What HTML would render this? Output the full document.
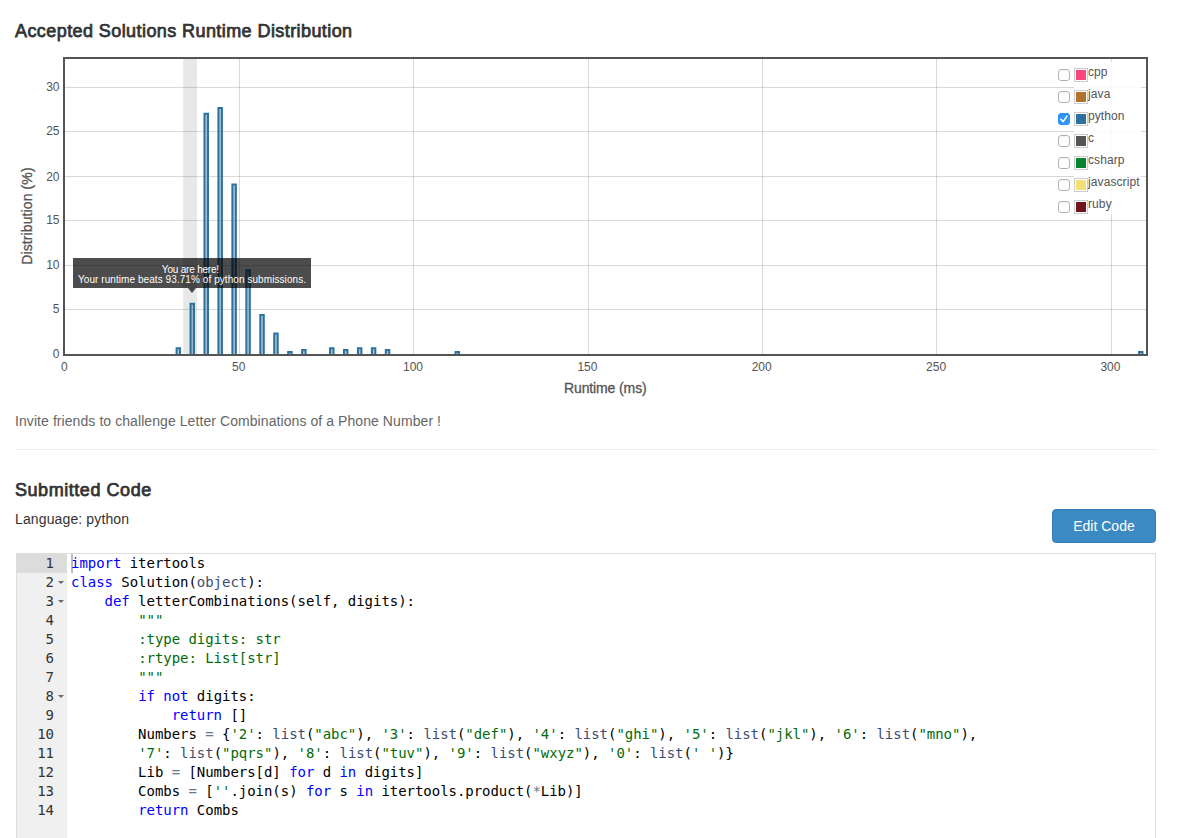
<!DOCTYPE html>
<html lang="en"><head><meta charset="utf-8"><title>Submission Detail</title>
<style>
html,body{margin:0;padding:0;background:#fff;}
body{width:1177px;height:838px;overflow:hidden;position:relative;font-family:"Liberation Sans",sans-serif;color:#333;font-size:14px;}
.abs{position:absolute;}
h4{position:absolute;margin:0;font-size:18px;font-weight:normal;-webkit-text-stroke:0.75px #333;letter-spacing:0.42px;color:#333;white-space:nowrap;line-height:20px;}
.plot{position:absolute;left:0;top:0;}
.tick{position:absolute;font-size:12px;line-height:16px;color:#545454;white-space:nowrap;}
.xt{top:359px;width:60px;text-align:center;}
.yt{left:0;width:59.5px;text-align:right;}
.axl{position:absolute;font-size:14px;-webkit-text-stroke:0.3px #545454;color:#545454;white-space:nowrap;line-height:16px;}
.legbg{position:absolute;left:1074px;top:62px;width:67px;height:152px;background:#fff;opacity:0.85;}
.cb{position:absolute;left:1058px;width:10px;height:10px;border:1px solid #b4b4b4;border-radius:3px;background:#fff;box-shadow:inset 0 1px 1px rgba(0,0,0,0.06);}
.cb.on{border-color:#3095f8;background:#3095f8;}
.cb svg{position:absolute;left:-1px;top:-1px;}
.sw{position:absolute;left:1074px;width:10px;height:10px;border:1px solid #ccc;padding:1px;background:#fff;}
.sw i{display:block;width:10px;height:10px;}
.lt{position:absolute;left:1088px;letter-spacing:0.1px;font-size:12px;line-height:16px;color:#545454;white-space:nowrap;}
.tip{position:absolute;left:73px;top:258px;width:238px;height:29.5px;background:rgba(0,0,0,0.7);color:#fff;font-size:10px;line-height:10px;text-align:center;}
.tip div{position:absolute;left:0;width:100%;white-space:nowrap;letter-spacing:0.07px;}
.tip:after{content:"";position:absolute;left:114.5px;top:100%;border:4.5px solid transparent;border-top:5px solid rgba(0,0,0,0.7);border-bottom:0;}
.btn{position:absolute;left:1052px;top:509px;width:104px;height:34px;box-sizing:border-box;background:#3b8ac4;border:1px solid #357ebd;border-radius:4px;color:#fff;font-size:14px;line-height:32px;text-align:center;}
.ed{position:absolute;left:16px;top:553px;width:1138px;height:300px;border:1px solid #ddd;background:#fff;overflow:hidden;font-family:"DejaVu Sans Mono","Liberation Mono",monospace;font-size:14px;line-height:19px;letter-spacing:-0.04px;}
.gut{position:absolute;left:0;top:0;width:50px;height:100%;background:#f0f0f0;color:#333;}
.gl{height:19px;text-align:right;padding-right:13px;position:relative;}
.gl.act{background:#dcdcdc;}
.gl b{position:absolute;left:40.5px;top:8px;border:3px solid transparent;border-top:3.5px solid #6a6a6a;border-bottom:0;}
.code{position:absolute;left:54px;top:0;white-space:pre;color:#000;}
.cl{height:19px;}
.k{color:#0000ff;}.s{color:#036a07;}.f{color:#3c4c72;}.o{color:#687687;}
.cur{position:absolute;left:54px;top:0;width:2px;height:19px;background:#bbb;}
</style></head><body>
<h4 style="left:15px;top:21px;">Accepted Solutions Runtime Distribution</h4>
<svg class="plot" width="1177" height="400" viewBox="0 0 1177 400">
<rect x="183.2" y="59" width="13.8" height="295" fill="#e8e8e8"/>
<line x1="239.5" y1="59" x2="239.5" y2="354" stroke="#545454" stroke-opacity="0.22" stroke-width="1"/>
<line x1="413.5" y1="59" x2="413.5" y2="354" stroke="#545454" stroke-opacity="0.22" stroke-width="1"/>
<line x1="588.5" y1="59" x2="588.5" y2="354" stroke="#545454" stroke-opacity="0.22" stroke-width="1"/>
<line x1="762.5" y1="59" x2="762.5" y2="354" stroke="#545454" stroke-opacity="0.22" stroke-width="1"/>
<line x1="936.5" y1="59" x2="936.5" y2="354" stroke="#545454" stroke-opacity="0.22" stroke-width="1"/>
<line x1="1111.5" y1="59" x2="1111.5" y2="354" stroke="#545454" stroke-opacity="0.22" stroke-width="1"/>
<line x1="65" y1="309.5" x2="1146" y2="309.5" stroke="#545454" stroke-opacity="0.22" stroke-width="1"/>
<line x1="65" y1="265.5" x2="1146" y2="265.5" stroke="#545454" stroke-opacity="0.22" stroke-width="1"/>
<line x1="65" y1="220.5" x2="1146" y2="220.5" stroke="#545454" stroke-opacity="0.22" stroke-width="1"/>
<line x1="65" y1="176.5" x2="1146" y2="176.5" stroke="#545454" stroke-opacity="0.22" stroke-width="1"/>
<line x1="65" y1="131.5" x2="1146" y2="131.5" stroke="#545454" stroke-opacity="0.22" stroke-width="1"/>
<line x1="65" y1="87.5" x2="1146" y2="87.5" stroke="#545454" stroke-opacity="0.22" stroke-width="1"/>
<rect x="176.59" y="348.23" width="3.49" height="5.77" fill="#2d719f" fill-opacity="0.4"/>
<path d="M176.59 354 L176.59 348.23 L180.07 348.23 L180.07 354" fill="none" stroke="#2d719f" stroke-width="2"/>
<rect x="190.54" y="303.72" width="3.49" height="50.28" fill="#2d719f" fill-opacity="0.4"/>
<path d="M190.54 354 L190.54 303.72 L194.02 303.72 L194.02 354" fill="none" stroke="#2d719f" stroke-width="2"/>
<rect x="204.48" y="113.63" width="3.49" height="240.37" fill="#2d719f" fill-opacity="0.4"/>
<path d="M204.48 354 L204.48 113.63 L207.97 113.63 L207.97 354" fill="none" stroke="#2d719f" stroke-width="2"/>
<rect x="218.43" y="107.94" width="3.49" height="246.06" fill="#2d719f" fill-opacity="0.4"/>
<path d="M218.43 354 L218.43 107.94 L221.92 107.94 L221.92 354" fill="none" stroke="#2d719f" stroke-width="2"/>
<rect x="232.38" y="184.60" width="3.49" height="169.40" fill="#2d719f" fill-opacity="0.4"/>
<path d="M232.38 354 L232.38 184.60 L235.87 184.60 L235.87 354" fill="none" stroke="#2d719f" stroke-width="2"/>
<rect x="246.33" y="270.14" width="3.49" height="83.86" fill="#2d719f" fill-opacity="0.4"/>
<path d="M246.33 354 L246.33 270.14 L249.82 270.14 L249.82 354" fill="none" stroke="#2d719f" stroke-width="2"/>
<rect x="260.28" y="314.91" width="3.49" height="39.09" fill="#2d719f" fill-opacity="0.4"/>
<path d="M260.28 354 L260.28 314.91 L263.76 314.91 L263.76 354" fill="none" stroke="#2d719f" stroke-width="2"/>
<rect x="274.23" y="333.57" width="3.49" height="20.43" fill="#2d719f" fill-opacity="0.4"/>
<path d="M274.23 354 L274.23 333.57 L277.71 333.57 L277.71 354" fill="none" stroke="#2d719f" stroke-width="2"/>
<rect x="288.17" y="352.05" width="3.49" height="1.95" fill="#2d719f" fill-opacity="0.4"/>
<path d="M288.17 354 L288.17 352.05 L291.66 352.05 L291.66 354" fill="none" stroke="#2d719f" stroke-width="2"/>
<rect x="302.12" y="350.00" width="3.49" height="4.00" fill="#2d719f" fill-opacity="0.4"/>
<path d="M302.12 354 L302.12 350.00 L305.61 350.00 L305.61 354" fill="none" stroke="#2d719f" stroke-width="2"/>
<rect x="330.02" y="348.23" width="3.49" height="5.77" fill="#2d719f" fill-opacity="0.4"/>
<path d="M330.02 354 L330.02 348.23 L333.51 348.23 L333.51 354" fill="none" stroke="#2d719f" stroke-width="2"/>
<rect x="343.97" y="350.00" width="3.49" height="4.00" fill="#2d719f" fill-opacity="0.4"/>
<path d="M343.97 354 L343.97 350.00 L347.45 350.00 L347.45 354" fill="none" stroke="#2d719f" stroke-width="2"/>
<rect x="357.92" y="348.23" width="3.49" height="5.77" fill="#2d719f" fill-opacity="0.4"/>
<path d="M357.92 354 L357.92 348.23 L361.40 348.23 L361.40 354" fill="none" stroke="#2d719f" stroke-width="2"/>
<rect x="371.86" y="348.23" width="3.49" height="5.77" fill="#2d719f" fill-opacity="0.4"/>
<path d="M371.86 354 L371.86 348.23 L375.35 348.23 L375.35 354" fill="none" stroke="#2d719f" stroke-width="2"/>
<rect x="385.81" y="350.00" width="3.49" height="4.00" fill="#2d719f" fill-opacity="0.4"/>
<path d="M385.81 354 L385.81 350.00 L389.30 350.00 L389.30 354" fill="none" stroke="#2d719f" stroke-width="2"/>
<rect x="455.55" y="352.05" width="3.49" height="1.95" fill="#2d719f" fill-opacity="0.4"/>
<path d="M455.55 354 L455.55 352.05 L459.04 352.05 L459.04 354" fill="none" stroke="#2d719f" stroke-width="2"/>
<rect x="1139.03" y="352.05" width="3.49" height="1.95" fill="#2d719f" fill-opacity="0.4"/>
<path d="M1139.03 354 L1139.03 352.05 L1142.51 352.05 L1142.51 354" fill="none" stroke="#2d719f" stroke-width="2"/>
<rect x="64" y="58" width="1083" height="297" fill="none" stroke="#545454" stroke-width="2"/>
</svg>
<div class="tick xt" style="left:34.3px">0</div><div class="tick xt" style="left:208.7px">50</div><div class="tick xt" style="left:383.0px">100</div><div class="tick xt" style="left:557.4px">150</div><div class="tick xt" style="left:731.7px">200</div><div class="tick xt" style="left:906.1px">250</div><div class="tick xt" style="left:1080.4px">300</div><div class="tick yt" style="top:346px">0</div><div class="tick yt" style="top:301px">5</div><div class="tick yt" style="top:257px">10</div><div class="tick yt" style="top:212px">15</div><div class="tick yt" style="top:169px">20</div><div class="tick yt" style="top:123px">25</div><div class="tick yt" style="top:79px">30</div>
<div class="axl" style="left:564px;top:380px;letter-spacing:-0.12px;">Runtime (ms)</div>
<div class="axl" style="left:27px;top:216px;letter-spacing:0.1px;transform:translate(-50%,-50%) rotate(-90deg);">Distribution (%)</div>
<div class="legbg"></div>
<div class="cb" style="top:69px"></div><div class="sw" style="top:68px"><i style="background:#fb467e"></i></div><div class="lt" style="top:64px">cpp</div><div class="cb" style="top:91px"></div><div class="sw" style="top:90px"><i style="background:#b0722c"></i></div><div class="lt" style="top:86px">java</div><div class="cb on" style="top:113px"><svg width="12" height="12" viewBox="0 0 12 12"><path d="M2.8 6.3 L5.2 8.7 L8.9 3.1" fill="none" stroke="#fff" stroke-width="1.5" stroke-linecap="round" stroke-linejoin="round"/></svg></div><div class="sw" style="top:112px"><i style="background:#2d719f"></i></div><div class="lt" style="top:108px">python</div><div class="cb" style="top:135px"></div><div class="sw" style="top:134px"><i style="background:#555555"></i></div><div class="lt" style="top:130px">c</div><div class="cb" style="top:157px"></div><div class="sw" style="top:156px"><i style="background:#078530"></i></div><div class="lt" style="top:152px">csharp</div><div class="cb" style="top:179px"></div><div class="sw" style="top:178px"><i style="background:#f3df73"></i></div><div class="lt" style="top:174px">javascript</div><div class="cb" style="top:201px"></div><div class="sw" style="top:200px"><i style="background:#70151e"></i></div><div class="lt" style="top:196px">ruby</div>
<div class="tip"><div style="top:7px;left:-1.6px;letter-spacing:-0.2px">You are here!</div><div style="top:17px">Your runtime beats 93.71% of python submissions.</div></div>
<div class="abs" style="left:15px;top:411px;color:#666;white-space:nowrap;line-height:20px;letter-spacing:0.075px;">Invite friends to challenge Letter Combinations of a Phone Number !</div>
<div class="abs" style="left:16px;top:449px;width:1140px;height:1px;background:#eee;"></div>
<h4 style="left:15px;top:480px;letter-spacing:0.55px">Submitted Code</h4>
<div class="abs" style="left:15px;top:509px;white-space:nowrap;line-height:20px;letter-spacing:0.13px;">Language: python</div>
<div class="btn">Edit Code</div>
<div class="ed"><div class="gut"><div class="gl act">1</div><div class="gl">2<b></b></div><div class="gl">3<b></b></div><div class="gl">4</div><div class="gl">5</div><div class="gl">6</div><div class="gl">7</div><div class="gl">8<b></b></div><div class="gl">9</div><div class="gl">10</div><div class="gl">11</div><div class="gl">12</div><div class="gl">13</div><div class="gl">14</div></div><div class="cur"></div><div class="code"><div class="cl"><span class="k">import</span> itertools</div><div class="cl"><span class="k">class</span> Solution(<span class="f">object</span>):</div><div class="cl">    <span class="k">def</span> letterCombinations(self, digits):</div><div class="cl">        <span class="s">"""</span></div><div class="cl">        <span class="s">:type digits: str</span></div><div class="cl">        <span class="s">:rtype: List[str]</span></div><div class="cl">        <span class="s">"""</span></div><div class="cl">        <span class="k">if</span> <span class="k">not</span> digits:</div><div class="cl">            <span class="k">return</span> []</div><div class="cl">        Numbers <span class="o">=</span> {<span class="s">'2'</span>: <span class="f">list</span>(<span class="s">"abc"</span>), <span class="s">'3'</span>: <span class="f">list</span>(<span class="s">"def"</span>), <span class="s">'4'</span>: <span class="f">list</span>(<span class="s">"ghi"</span>), <span class="s">'5'</span>: <span class="f">list</span>(<span class="s">"jkl"</span>), <span class="s">'6'</span>: <span class="f">list</span>(<span class="s">"mno"</span>),</div><div class="cl">        <span class="s">'7'</span>: <span class="f">list</span>(<span class="s">"pqrs"</span>), <span class="s">'8'</span>: <span class="f">list</span>(<span class="s">"tuv"</span>), <span class="s">'9'</span>: <span class="f">list</span>(<span class="s">"wxyz"</span>), <span class="s">'0'</span>: <span class="f">list</span>(<span class="s">' '</span>)}</div><div class="cl">        Lib <span class="o">=</span> [Numbers[d] <span class="k">for</span> d <span class="k">in</span> digits]</div><div class="cl">        Combs <span class="o">=</span> [<span class="s">''</span>.join(s) <span class="k">for</span> s <span class="k">in</span> itertools.product(<span class="o">*</span>Lib)]</div><div class="cl">        <span class="k">return</span> Combs</div></div></div>
</body></html>
